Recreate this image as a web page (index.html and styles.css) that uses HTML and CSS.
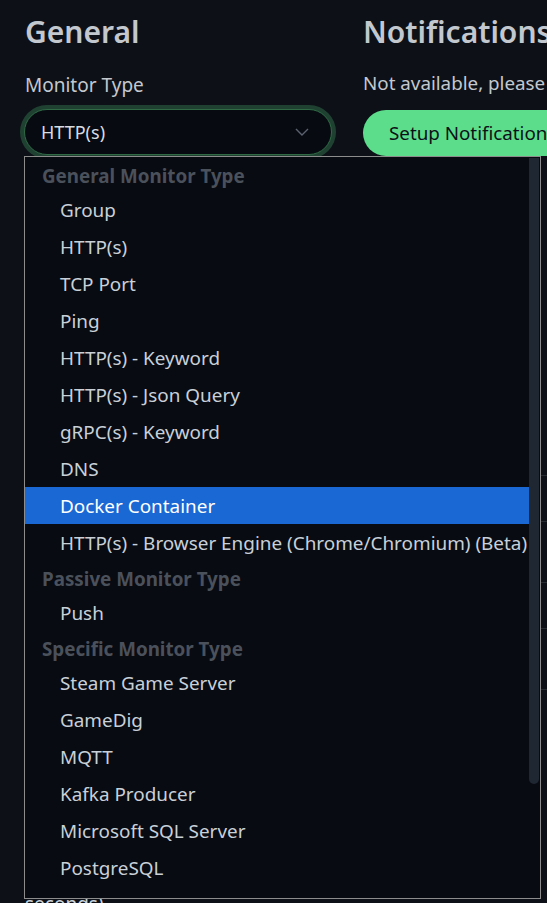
FILE: index.html
```html
<!DOCTYPE html>
<html>
<head>
<meta charset="utf-8">
<link rel="stylesheet" href="styles.css">
</head>
<body>
<div class="page">
  <div class="col left">
    <h2 class="heading">General</h2>
    <label class="label">Monitor Type</label>
    <div class="select">
      <span class="select-text">HTTP(s)</span>
      <svg class="chev" width="14" height="8" viewBox="0 0 14 8"><path d="M1 1 L7 7 L13 1" fill="none" stroke="#5b6270" stroke-width="1.4"/></svg>
    </div>
    <div class="below">seconds)</div>
  </div>
  <div class="col right">
    <h2 class="heading">Notifications</h2>
    <p class="note">Not available, please</p>
    <button class="btn">Setup Notification</button>
    <div class="rows">
      <div class="row short"></div>
      <div class="row tall"></div>
      <div class="row short"></div>
      <div class="row tall"></div>
    </div>
  </div>
</div>

<div class="dropdown">
  <div class="list">
    <div class="group">General Monitor Type</div>
    <div class="item">Group</div>
    <div class="item">HTTP(s)</div>
    <div class="item">TCP Port</div>
    <div class="item">Ping</div>
    <div class="item">HTTP(s) - Keyword</div>
    <div class="item">HTTP(s) - Json Query</div>
    <div class="item">gRPC(s) - Keyword</div>
    <div class="item">DNS</div>
    <div class="item selected">Docker Container</div>
    <div class="item">HTTP(s) - Browser Engine (Chrome/Chromium) (Beta)</div>
    <div class="group">Passive Monitor Type</div>
    <div class="item">Push</div>
    <div class="group">Specific Monitor Type</div>
    <div class="item">Steam Game Server</div>
    <div class="item">GameDig</div>
    <div class="item">MQTT</div>
    <div class="item">Kafka Producer</div>
    <div class="item">Microsoft SQL Server</div>
    <div class="item">PostgreSQL</div>
  </div>
  <div class="scrollbar"><div class="thumb"></div></div>
</div>
</body>
</html>
```
FILE: styles.css
```css
html, body {
  margin: 0;
  padding: 0;
  background: #0d1117;
  overflow: hidden;
  height: 903px;
}
body {
  font-family: "Noto Sans", "Open Sans", sans-serif;
  color: #c9d1d9;
}
.page {
  display: flex;
  padding-left: 25px;
  gap: 25px;
}
.col.left {
  width: 313px;
  flex: none;
}
.col.right {
  flex: none;
  width: 300px;
}
.heading {
  margin: 12px 0 0 0;
  font-size: 30px;
  font-weight: 600;
  line-height: 40px;
  color: #c3c8cf;
  white-space: nowrap;
}
.label {
  display: block;
  margin-top: 20px;
  font-size: 19px;
  line-height: 26px;
  color: #c3c8cf;
}
.select {
  margin-top: 11px;
  margin-left: -1px;
  width: 308px;
  height: 46px;
  box-sizing: border-box;
  border: 1px solid #2f6a45;
  border-radius: 24px;
  background: #070a10;
  box-shadow: 0 0 0 4px rgba(92, 221, 139, 0.24);
  display: flex;
  align-items: center;
  justify-content: space-between;
  padding: 0 22px 0 16px;
}
.select-text {
  font-size: 18px;
  color: #d7dce2;
}
.chev { display: block; }
.below {
  margin-top: 737px;
  font-size: 19px;
  line-height: 24px;
  color: #c9d1d9;
}
.note {
  margin: 18px 0 0 0;
  font-size: 18.8px;
  line-height: 26px;
  color: #c3c8cf;
  white-space: nowrap;
}
.btn {
  margin-top: 14px;
  height: 46px;
  border: none;
  border-radius: 23px;
  background: #5cdd8b;
  color: #0d1117;
  font-family: "Noto Sans", "Open Sans", sans-serif;
  font-size: 18.8px;
  padding: 0 26px;
  white-space: nowrap;
}
.rows {
  margin-top: 319px;
  border-top: 1px solid #272c33;
}
.row {
  border-bottom: 1px solid #272c33;
}
.row.short { height: 45px; }
.row.tall { height: 60px; }

.dropdown {
  position: absolute;
  left: 24px;
  top: 156px;
  width: 515px;
  height: 741px;
  border: 1px solid #8c8c8c;
  background: #080b12;
  overflow: hidden;
  display: flex;
}
.list {
  flex: 1;
  min-width: 0;
  padding-top: 1px;
}
.group {
  height: 33px;
  line-height: 36px;
  padding-left: 17px;
  font-size: 18.8px;
  font-weight: 700;
  color: #4b515b;
  white-space: nowrap;
}
.item {
  height: 37px;
  line-height: 38px;
  padding-left: 35px;
  font-size: 18.9px;
  color: #c9d0d8;
  white-space: nowrap;
}
.item.selected {
  background: #1a68d4;
  color: #ffffff;
}
.scrollbar {
  width: 11px;
  flex: none;
  padding-top: 1px;
}
.thumb {
  width: 10px;
  height: 626px;
  background: #1f2733;
  border-radius: 0 0 5px 5px;
}
```
